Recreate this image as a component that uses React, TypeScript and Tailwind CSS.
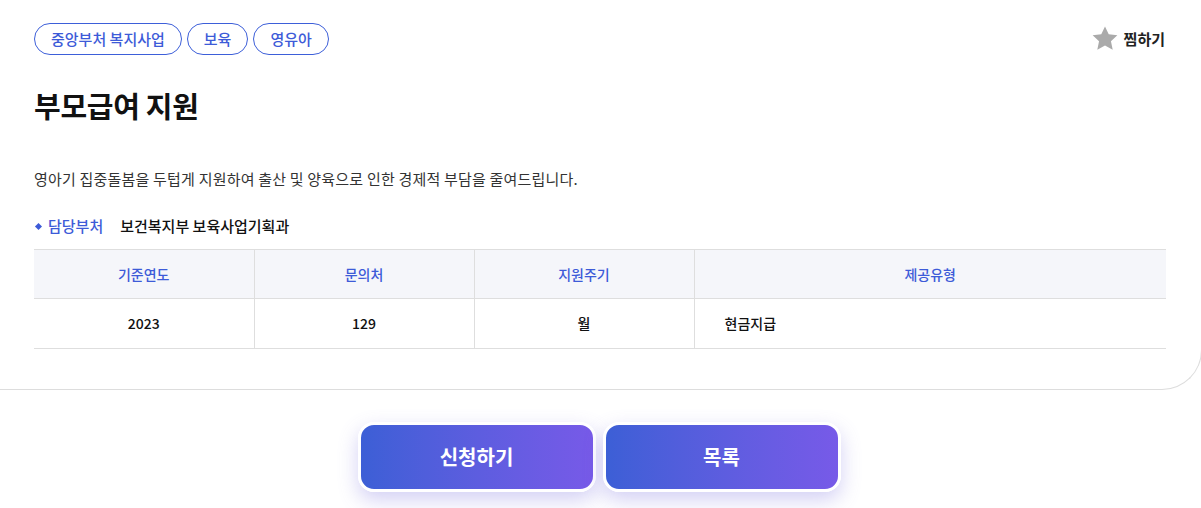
const tags = ['중앙부처 복지사업', '보육', '영유아']

const headers = ['기준연도', '문의처', '지원주기', '제공유형']

export default function App() {
  return (
    <div className="w-[1201px] h-[508px] overflow-hidden bg-white font-['Noto_Sans_CJK_KR','Noto_Sans',sans-serif] text-[#111]">
      <div className="w-[1202px] h-[390px] border-b border-r border-[#dddddd] rounded-br-[40px] pl-[34px] pr-[35px] pt-[23px]">
        <div className="flex items-center justify-between">
          <div className="flex gap-[5px]">
            {tags.map((t) => (
              <span
                key={t}
                className="h-[32px] px-[16px] flex items-center rounded-full border border-[#3d5fd9] text-[#3d5bd8] text-[15px] font-medium"
              >
                {t}
              </span>
            ))}
          </div>
          <button className="flex items-center gap-[5px] text-[15px] font-bold text-[#222] mr-[1px]">
            <svg width="28" height="28" viewBox="0 0 24 24">
              <path
                d="M12 1.2l3.2 6.7 7.4.9-5.5 5.1 1.5 7.3L12 17.6 5.4 21.2l1.5-7.3-5.5-5.1 7.4-.9z"
                fill="#aaaaaa"
              />
            </svg>
            찜하기
          </button>
        </div>

        <h1 className="mt-[30px] text-[29px] font-bold leading-[40px] tracking-[-0.3px]">부모급여 지원</h1>

        <p className="mt-[43px] text-[15px] tracking-[0.2px] text-[#333] leading-[22px]">
          영아기 집중돌봄을 두텁게 지원하여 출산 및 양육으로 인한 경제적 부담을 줄여드립니다.
        </p>

        <div className="mt-[25px] flex items-center text-[15px] leading-[22px]">
          <span className="w-[5px] h-[5px] bg-[#3d5bd8] rotate-45 ml-[2px] mr-[7px]" />
          <span className="text-[#3d5bd8] font-medium">담당부처</span>
          <span className="ml-[17px] font-medium text-[#111]">보건복지부 보육사업기획과</span>
        </div>

        <table className="mt-[12px] w-full border-collapse text-[14px]">
          <thead>
            <tr className="bg-[#f5f6fa] border-t border-b border-[#dedede]">
              {headers.map((h, i) => (
                <th
                  key={h}
                  className={`h-[49px] font-medium text-[#3d5bd8] text-center ${i < 3 ? 'w-[220px] border-r border-[#dedede]' : ''}`}
                >
                  {h}
                </th>
              ))}
            </tr>
          </thead>
          <tbody>
            <tr className="border-b border-[#dedede]">
              <td className="h-[50px] text-center font-medium border-r border-[#dedede]">2023</td>
              <td className="text-center font-medium border-r border-[#dedede]">129</td>
              <td className="text-center font-medium border-r border-[#dedede]">월</td>
              <td className="pl-[30px] font-medium">현금지급</td>
            </tr>
          </tbody>
        </table>
      </div>

      <div className="flex justify-center gap-[7px] mt-[32px] pr-[3px]">
        {['신청하기', '목록'].map((b) => (
          <button
            key={b}
            className="w-[238px] h-[70px] rounded-[16px] border-[3px] border-white bg-gradient-to-r from-[#3c5fd6] to-[#775ae8] text-white text-[20px] font-bold shadow-[0_8px_20px_rgba(110,100,220,0.3)]"
          >
            {b}
          </button>
        ))}
      </div>
    </div>
  )
}
